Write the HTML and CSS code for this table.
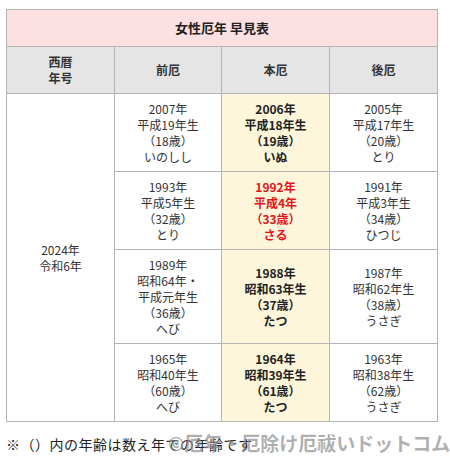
FILE: index.html
```html
<!DOCTYPE html>
<html lang="ja">
<head>
<meta charset="utf-8">
<link rel="stylesheet" href="styles.css">
</head>
<body>
<div class="wrap">
  <table class="yaku">
    <colgroup>
      <col class="c1"><col class="c2"><col class="c3"><col class="c4">
    </colgroup>
    <thead>
      <tr><th colspan="4" class="title">女性厄年 早見表</th></tr>
      <tr class="head">
        <th>西暦<br>年号</th>
        <th>前厄</th>
        <th>本厄</th>
        <th>後厄</th>
      </tr>
    </thead>
    <tbody>
      <tr>
        <td rowspan="4" class="year">2024年<br>令和6年</td>
        <td>2007年<br>平成19年生<br>（18歳）<br>いのしし</td>
        <td class="hon">2006年<br>平成18年生<br>（19歳）<br>いぬ</td>
        <td>2005年<br>平成17年生<br>（20歳）<br>とり</td>
      </tr>
      <tr>
        <td>1993年<br>平成5年生<br>（32歳）<br>とり</td>
        <td class="hon red">1992年<br>平成4年<br>（33歳）<br>さる</td>
        <td>1991年<br>平成3年生<br>（34歳）<br>ひつじ</td>
      </tr>
      <tr>
        <td>1989年<br>昭和64年・<br>平成元年生<br>（36歳）<br>へび</td>
        <td class="hon">1988年<br>昭和63年生<br>（37歳）<br>たつ</td>
        <td>1987年<br>昭和62年生<br>（38歳）<br>うさぎ</td>
      </tr>
      <tr>
        <td>1965年<br>昭和40年生<br>（60歳）<br>へび</td>
        <td class="hon">1964年<br>昭和39年生<br>（61歳）<br>たつ</td>
        <td>1963年<br>昭和38年生<br>（62歳）<br>うさぎ</td>
      </tr>
    </tbody>
  </table>
  <div class="foot">
    <p class="note">※（）内の年齢は数え年での年齢です</p>
    <span class="mark">©厄年・厄除け厄祓いドットコム</span>
  </div>
</div>
</body>
</html>
```

FILE: styles.css
```css
html, body {
  margin: 0;
  padding: 0;
  background: #ffffff;
}
body {
  font-family: "Noto Sans CJK JP", "Noto Sans", sans-serif;
  color: #333333;
}
.wrap {
  padding: 9px 0 0 6px;
  width: 432px;
}
.yaku {
  border-collapse: collapse;
  table-layout: fixed;
  width: 432px;
  font-size: 12px;
  line-height: 16px;
}
.c1, .c3, .c4 { width: 108px; }
.c2 { width: 107px; }
.yaku th, .yaku td {
  border: 1px solid #b4b4b4;
  text-align: center;
  vertical-align: middle;
  padding: 7px 2px 6px;
}
.yaku .title {
  background: #fde0e1;
  font-size: 13px;
  font-weight: bold;
  padding: 10px 2px;
  color: #222;
}
.head th {
  background: #e5e5e5;
  font-weight: bold;
  padding: 7px 2px;
  color: #333;
}
.yaku td.hon {
  background: #fdf6da;
  font-weight: bold;
  color: #222;
}
.yaku td.red {
  color: #e5141c;
}
.foot {
  position: relative;
  height: 38px;
}
.note {
  margin: 0;
  padding-top: 12px;
  font-size: 14px;
  line-height: 20px;
  color: #222;
  letter-spacing: 0.5px;
}
.mark {
  position: absolute;
  left: 162px;
  top: 9px;
  font-size: 19px;
  font-weight: bold;
  line-height: 24px;
  color: rgba(140, 140, 140, 0.7);
  white-space: nowrap;
}
```
